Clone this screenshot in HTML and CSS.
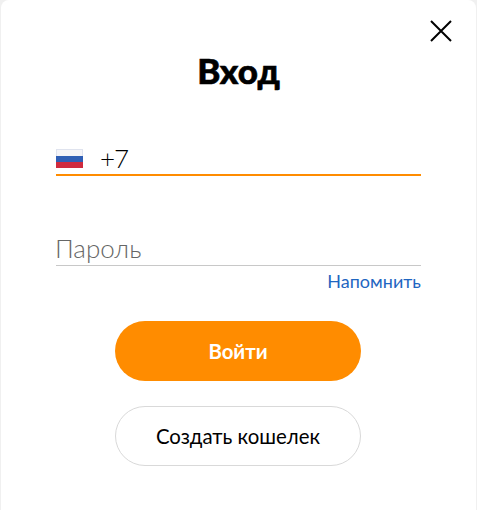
FILE: index.html
```html
<!DOCTYPE html>
<html lang="ru">
	<head>
		<title>Вход</title>
		<link rel="stylesheet" href="styles.css">
	</head>
	<body>
		<div class="modal">
			<button class="close-btn" aria-label="Закрыть">
				<svg width="22" height="22" viewBox="0 0 22 22">
					<path d="M1 1 L21 21 M21 1 L1 21" stroke="#000" stroke-width="2" fill="none"/>
				</svg>
			</button>
			<h1>Вход</h1>
			<form class="login-form">
				<div class="field field-phone">
					<div class="flag">
						<span class="flag-white"></span>
						<span class="flag-blue"></span>
						<span class="flag-red"></span>
					</div>
					<span class="phone-value">+7</span>
				</div>
				<div class="field field-password">
					<span class="placeholder">Пароль</span>
				</div>
				<div class="remind-row">
					<a class="remind" href="#">Напомнить</a>
				</div>
				<div class="buttons">
					<button class="btn btn-primary" type="button">Войти</button>
					<button class="btn btn-outline" type="button">Создать кошелек</button>
				</div>
			</form>
		</div>
	</body>
</html>
```

FILE: styles.css
```css
* {
	box-sizing: border-box;
	font-family: Lato, "Open Sans", sans-serif;
}
html, body {
	margin: 0;
	height: 100%;
}
body {
	background: #f0f0f0;
	overflow: hidden;
}

.modal {
	position: relative;
	height: 510px;
	margin: 0 1px;
	padding: 47px 55px 0;
	background: #fff;
	border-radius: 8px 8px 0 0;
}
.modal h1 {
	margin: 0;
	height: 48px;
	line-height: 46px;
	font-size: 35px;
	font-weight: 900;
	-webkit-text-stroke: 0.6px #000;
	text-align: center;
	color: #000;
}

.close-btn {
	position: absolute;
	top: 20px;
	right: 24px;
	width: 22px;
	height: 22px;
	padding: 0;
	border: 0;
	background: transparent;
	cursor: pointer;
}
.close-btn svg {
	display: block;
}

.login-form {
	margin-top: 46px;
}

.field {
	display: flex;
	align-items: flex-end;
}
.field-phone {
	height: 35px;
	padding-bottom: 6px;
	border-bottom: 2px solid #ff8c00;
}
.field-password {
	height: 54px;
	margin-top: 36px;
	padding-bottom: 1px;
	border-bottom: 1px solid #c8c8c8;
}

.flag {
	display: flex;
	flex-direction: column;
	width: 27px;
	height: 19px;
	margin-right: 17px;
}
.flag span {
	flex: 1;
}
.flag-white {
	background: #f4f4f8;
	border: 1px solid #dfe3ee;
	border-bottom: 0;
}
.flag-blue {
	background: #2f5fb5;
}
.flag-red {
	background: #cf2a3e;
}

.phone-value {
	font-size: 26px;
	line-height: 20px;
	letter-spacing: -1px;
	color: #000;
	font-weight: 300;
}
.placeholder {
	color: #666;
	font-size: 26px;
	line-height: 32px;
	font-weight: 300;
	margin-left: -1px;
}

.remind-row {
	display: flex;
	justify-content: flex-end;
	margin-top: 4px;
}
.remind {
	color: #1f66c1;
	font-size: 18px;
	line-height: 22px;
	text-decoration: none;
}

.buttons {
	display: flex;
	flex-direction: column;
	align-items: center;
	gap: 25px;
	margin-top: 29px;
	padding-right: 1px;
}
.btn {
	width: 246px;
	height: 60px;
	border-radius: 30px;
	font-size: 20.4px;
	cursor: pointer;
}
.btn-primary {
	border: 0;
	background: #ff8c00;
	color: #fff;
	font-weight: 700;
}
.btn-outline {
	border: 1px solid #d9d9d9;
	background: #fff;
	color: #000;
	font-weight: 400;
}
```
